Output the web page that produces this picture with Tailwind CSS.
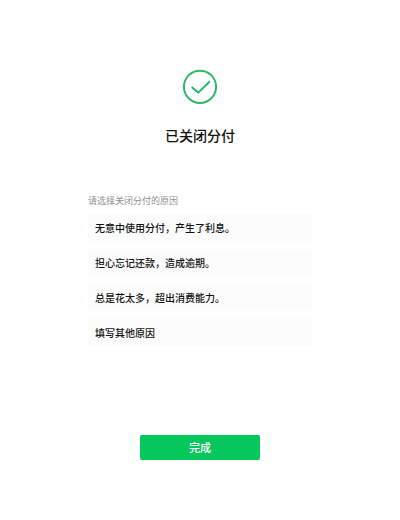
<!DOCTYPE html>
<html lang="zh-CN">
<head>
<meta charset="utf-8">
<meta name="viewport" content="width=device-width, initial-scale=1">
<title>已关闭分付</title>
<script src="https://cdn.jsdelivr.net/npm/@tailwindcss/browser@4"></script>
</head>
<body class="bg-white font-['Noto_Sans_CJK_SC',sans-serif] text-[#111111]">
<main class="flex min-h-screen flex-col items-center pt-[69px] pb-[60px]">
  <svg class="size-9 text-[#2bb767]" viewBox="0 0 36 36" fill="none" stroke="currentColor" stroke-width="2" aria-hidden="true">
    <circle cx="18" cy="17.8" r="16.1"/>
    <path d="M10.3 18.4l6 5.2L27.2 13" stroke-linecap="round" stroke-linejoin="round"/>
  </svg>
  <h1 class="mt-5 text-[14px] leading-5 font-medium">已关闭分付</h1>
  <form class="flex w-full grow flex-col items-center pt-12">
    <fieldset class="w-full px-[22%]">
      <legend class="text-[9px] leading-4 text-[#8f8f8f]">请选择关闭分付的原因</legend>
      <div class="flex flex-col gap-2 pt-[5px] text-[10px] leading-[15px] font-medium">
        <button type="button" class="bg-[#fcfcfc] px-[7px] py-1.5 text-left">无意中使用分付，产生了利息。</button>
        <button type="button" class="bg-[#fcfcfc] px-[7px] py-1.5 text-left">担心忘记还款，造成逾期。</button>
        <button type="button" class="bg-[#fcfcfc] px-[7px] py-1.5 text-left">总是花太多，超出消费能力。</button>
        <button type="button" class="bg-[#fcfcfc] px-[7px] py-1.5 text-left">填写其他原因</button>
      </div>
    </fieldset>
    <button type="submit" class="mt-auto w-[30%] rounded-xs bg-[#05c75b] py-1 text-[11px] leading-[17px] font-medium text-white">完成</button>
  </form>
</main>
</body>
</html>
